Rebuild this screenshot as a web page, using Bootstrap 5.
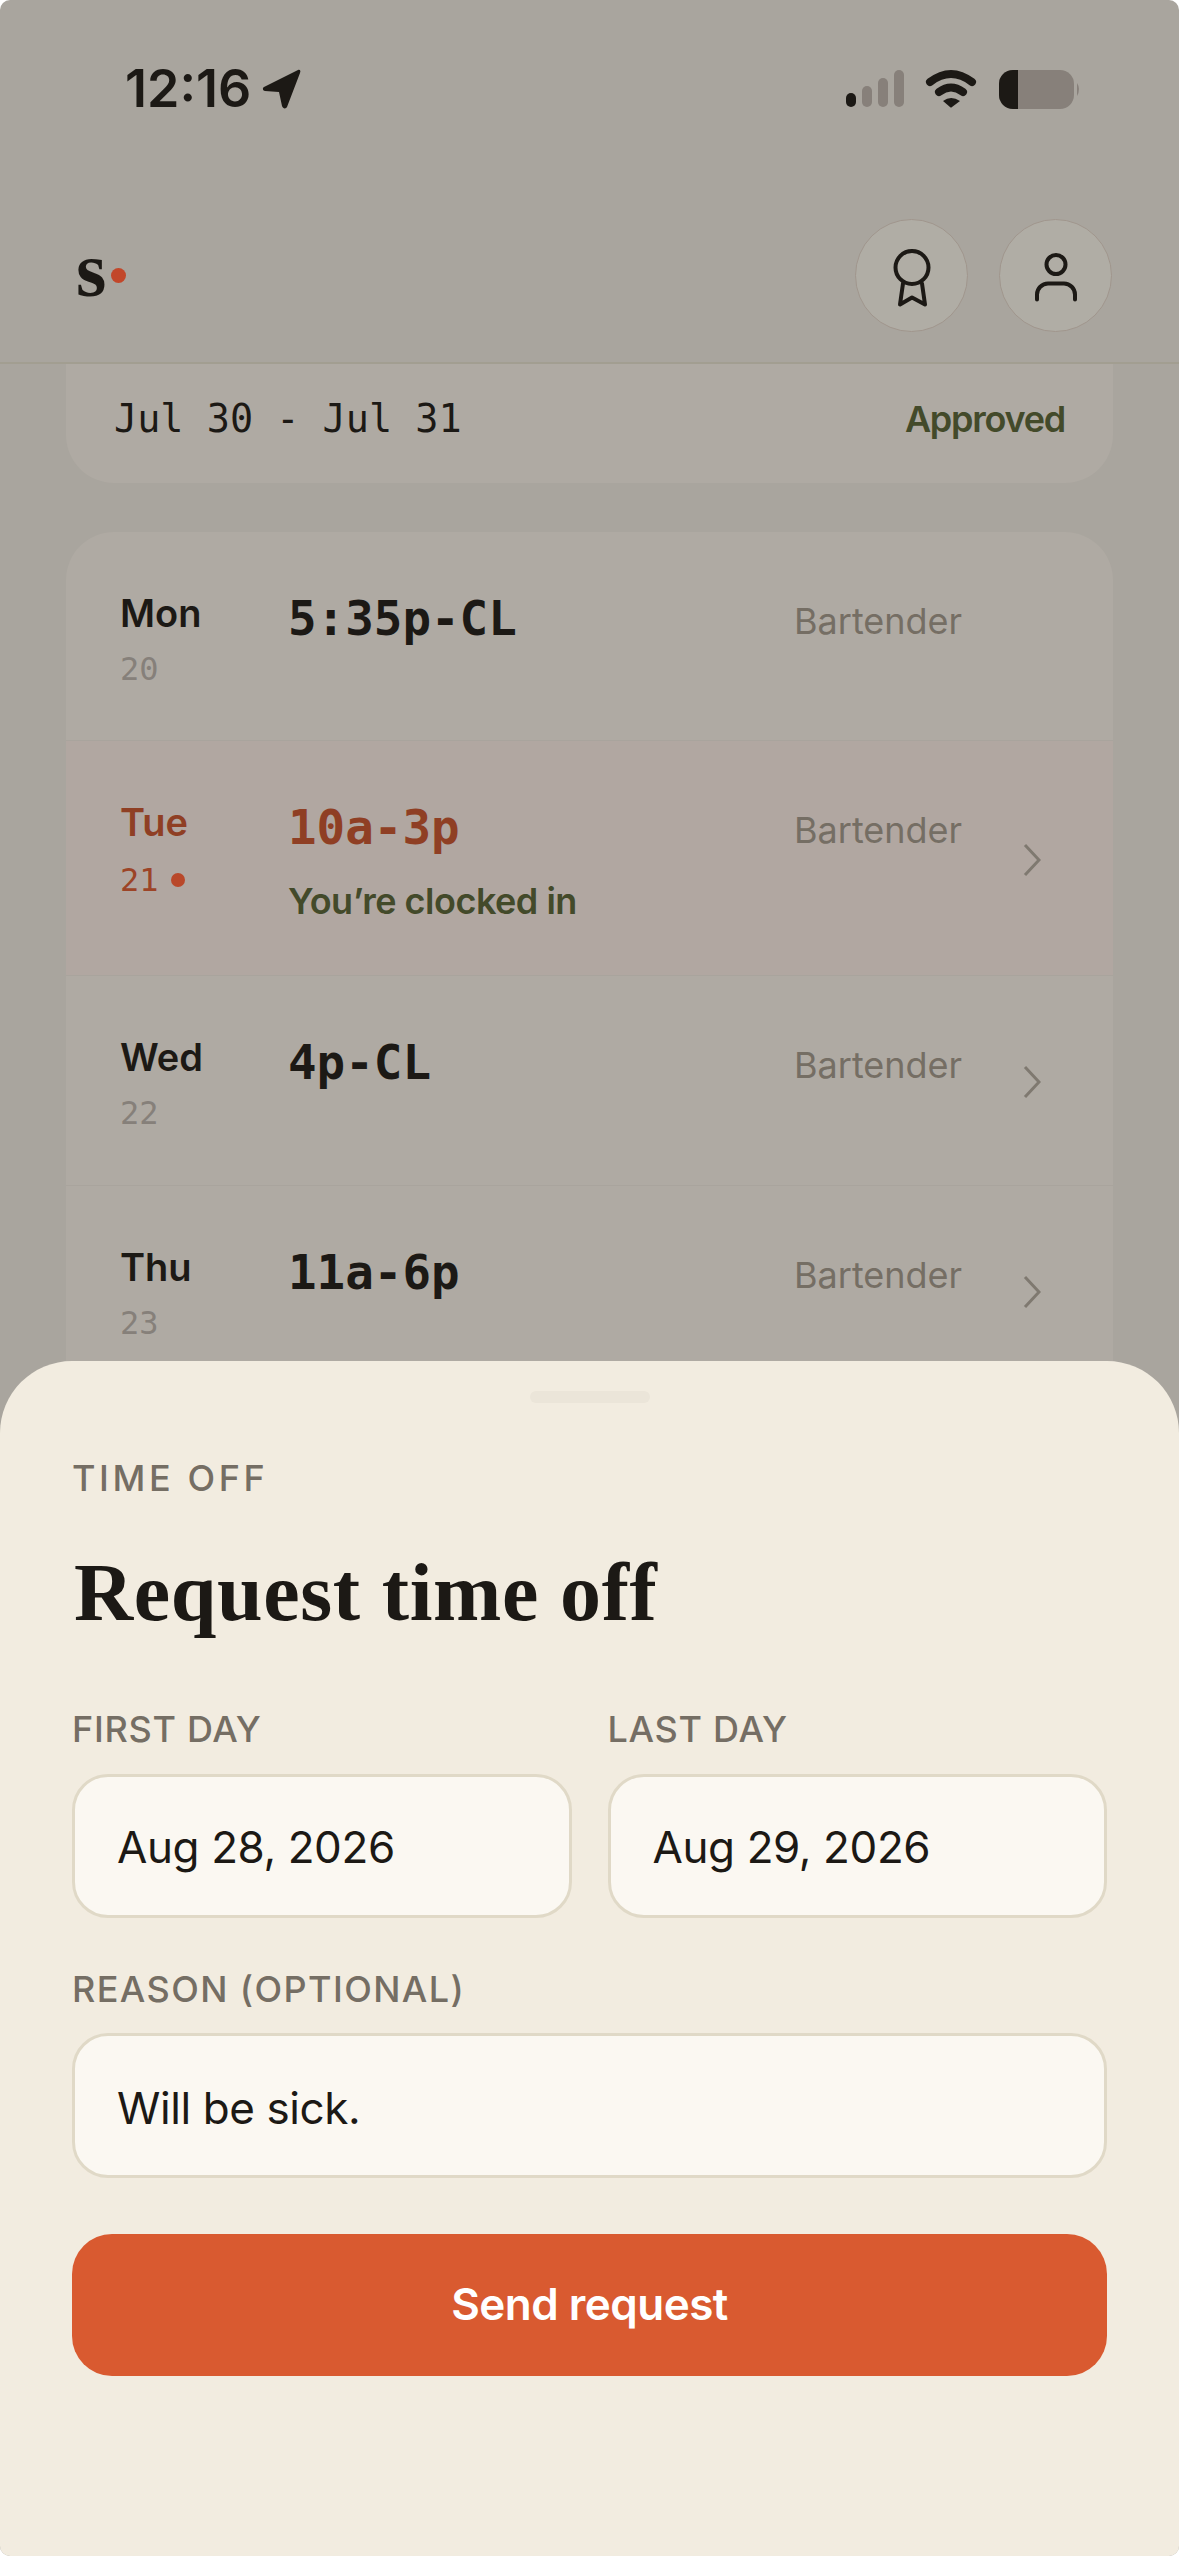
<!DOCTYPE html>
<html lang="en">
<head>
  <meta charset="UTF-8" />
  <title>Request time off</title>
  <link href="https://cdn.jsdelivr.net/npm/bootstrap@5.3.3/dist/css/bootstrap.min.css" rel="stylesheet">
  <style>
    html, body { height: 2556px; }
    body { background: #fff; color: #1c1915; font-family: Inter, "Liberation Sans", sans-serif; overflow: hidden; }
    .phone { height: 2556px; overflow: hidden; background: #a9a59e; border-radius: 10px; }

    .app-top { height: 364px; border-bottom: 2px solid #a29e91; }
    .status-row { height: 219px; padding: 69px 98px 0 125px; }
    .clock { font-size: 52px; line-height: 40px; font-weight: 600; }
    .loc-icon { margin-left: 11px; }
    .brand-row { padding: 0 67px 0 76px; }
    .brand-s { font-family: "Liberation Serif", serif; font-weight: 700; font-size: 78px; line-height: 1; margin-top: -12px; }
    .brand-dot { width: 15px; height: 15px; background: #c2472a; border-radius: 50%; margin-left: 5px; }
    .round-btn { width: 113px; height: 113px; border-radius: 50%; background: #b0ada5; border: 1px solid #a0968d; }
    .round-gap { gap: 31px; }

    .pane { margin: 0 66px; background: #afaaa3; }
    .pane-off { height: 119px; border-radius: 0 0 48px 48px; padding: 0 48px 9px; }
    .pane-days { margin-top: 49px; border-radius: 48px 48px 0 0; overflow: hidden; }
    .mono { font-family: "DejaVu Sans Mono", "Liberation Mono", monospace; }
    .off-dates { font-size: 38.5px; }
    .ok-text { font-size: 36px; font-weight: 600; color: #434a2a; letter-spacing: -1.25px; }

    .day-row { padding: 54px 72px 52px 54px; border-bottom: 1px solid #a9a49d; }
    .day-row:first-child { padding-bottom: 51px; }
    .day-row.today { background: #b1a7a1; padding-bottom: 51px; }
    .day-col { width: 168px; flex: none; }
    .day-name { font-size: 38px; line-height: 50px; font-weight: 600; margin-top: 2px; }
    .day-num { font-size: 32px; line-height: 40px; margin-top: 11px; color: #86807a; }
    .today .day-num { margin-top: 13px; }
    .shift-col { flex: 1; }
    .shift-time { font-size: 47.5px; line-height: 60px; font-weight: 700; margin-top: 3px; }
    .shift-note { font-size: 36px; line-height: 45px; font-weight: 600; color: #434a2a; margin-top: 21px; letter-spacing: -0.5px; }
    .role-col { width: 229px; flex: none; font-size: 36px; line-height: 45px; color: #756e64; margin: 13px 0 0 -2px; }
    .chev { width: 18px; flex: none; }
    .today .day-name, .today .shift-time { color: #8f3f24; }
    .today .day-num { color: #9c4427; }
    .now-dot { display: inline-block; width: 14px; height: 14px; border-radius: 50%; background: #b9482a; margin-left: 12px; vertical-align: 4px; }

    .sheet { position: absolute; left: 0; right: 0; bottom: 0; height: 1195px; background: #f2ece0; border-radius: 72px 72px 0 0; padding: 30px 72px 0; }
    .grab { width: 120px; height: 12px; background: #ebe5d9; border-radius: 6px; margin: 0 auto 53px; }
    .field-cap { font-size: 36px; line-height: 44px; font-weight: 500; letter-spacing: 0.7px; color: #756e64; text-transform: uppercase; }
    .field-cap.sheet-kicker { letter-spacing: 3.6px; }
    .field-cap.reason-cap { margin-top: 49px; letter-spacing: 1.4px; }
    .sheet-title { font-family: "Liberation Serif", serif; font-weight: 700; font-size: 82px; line-height: 100px; letter-spacing: 0.6px; margin: 43px 0 64px 2px; }
    .two-up { display: grid; grid-template-columns: 1fr 1fr; gap: 36px; }
    .form-control.sheet-box { height: 144px; margin-top: 23px; border: 3px solid #e0d9c7; border-radius: 36px; background: #fbf8f2; color: #1c1915; font-size: 44px; letter-spacing: -0.4px; padding: 2px 42px 0; display: flex; align-items: center; }
    .form-control.reason-box { margin-top: 22px; height: 145px; padding-top: 4px; }
    .btn.send-btn { display: block; width: 100%; height: 142px; margin-top: 56px; padding-bottom: 8px; background: #d95a30; border: 0; border-radius: 40px; color: #fff; font-size: 44px; font-weight: 600; letter-spacing: -0.5px; }
  </style>
</head>
<body>
  <div class="phone position-relative">
    <div class="app-top">
      <div class="status-row d-flex justify-content-between align-items-start">
        <div class="d-flex align-items-start">
          <span class="clock">12:16</span>
          <svg class="loc-icon" width="40" height="40" viewBox="0 0 40 40"><path d="M36 1 2 18c-2 1-1 4 1 4l14 1 3 14c1 3 4 3 5 1L38 4c1-2 0-4-2-3z" fill="#1c1915"/></svg>
        </div>
        <svg width="236" height="42" viewBox="845 68 236 42">
          <rect x="846" y="92" width="10" height="14" rx="5" fill="#1c1915"/>
          <rect x="862" y="85" width="10" height="21" rx="5" fill="#87807a"/>
          <rect x="878" y="77" width="10" height="29" rx="5" fill="#87807a"/>
          <rect x="894" y="69" width="10" height="37" rx="5" fill="#87807a"/>
          <path d="M930 81q21-16 42 0M939 91q12-9 24 0" fill="none" stroke="#1c1915" stroke-width="8" stroke-linecap="round"/>
          <path d="M943 100q8-6 17 0l-8 6q-1 1-2 0z" fill="#1c1915"/>
          <rect x="999" y="69" width="75" height="39" rx="14" fill="#87807a"/>
          <path d="M1013 69h5v39h-5a14 14 0 0 1-14-14V83a14 14 0 0 1 14-14z" fill="#1c1915"/>
          <path d="M1077 82q4 6 0 13z" fill="#87807a"/>
        </svg>
      </div>
      <div class="brand-row d-flex justify-content-between align-items-center">
        <div class="d-flex align-items-center">
          <span class="brand-s">s</span><span class="brand-dot"></span>
        </div>
        <div class="d-flex round-gap">
          <div class="round-btn d-flex align-items-center justify-content-center">
            <svg width="60" height="80" viewBox="0 -5.5 60 80"><g fill="none" stroke="#1c1915" stroke-width="4" stroke-linecap="round" stroke-linejoin="round"><circle cx="30" cy="26" r="16.5"/><path d="M21 42l-3 21 12-7 13 7-3-21"/></g></svg>
          </div>
          <div class="round-btn d-flex align-items-center justify-content-center">
            <svg width="60" height="80" viewBox="0 -3.5 60 80"><g fill="none" stroke="#1c1915" stroke-width="4" stroke-linecap="round"><circle cx="30" cy="25" r="9.5"/><path d="M11 60v-5c0-6 5-11 11-11h16c6 0 11 5 11 11v5"/></g></svg>
          </div>
        </div>
      </div>
    </div>

    <div class="pane pane-off d-flex justify-content-between align-items-center">
      <span class="mono off-dates">Jul 30 - Jul 31</span>
      <span class="ok-text">Approved</span>
    </div>

    <div class="pane pane-days">
      <div class="day-row d-flex">
        <div class="day-col"><div class="day-name">Mon</div><div class="day-num mono">20</div></div>
        <div class="shift-col"><div class="shift-time mono">5:35p-CL</div></div>
        <div class="role-col">Bartender</div>
        <div class="chev"></div>
      </div>
      <div class="day-row today d-flex">
        <div class="day-col"><div class="day-name">Tue</div><div class="day-num mono">21<span class="now-dot"></span></div></div>
        <div class="shift-col"><div class="shift-time mono">10a-3p</div><div class="shift-note">You’re clocked in</div></div>
        <div class="role-col">Bartender</div>
        <div class="chev align-self-center"><svg width="18" height="34" viewBox="0 0 18 34"><path d="M2 2l14 15L2 32" fill="none" stroke="#7f7970" stroke-width="3"/></svg></div>
      </div>
      <div class="day-row d-flex">
        <div class="day-col"><div class="day-name">Wed</div><div class="day-num mono">22</div></div>
        <div class="shift-col"><div class="shift-time mono">4p-CL</div></div>
        <div class="role-col">Bartender</div>
        <div class="chev align-self-center"><svg width="18" height="34" viewBox="0 0 18 34"><path d="M2 2l14 15L2 32" fill="none" stroke="#7f7970" stroke-width="3"/></svg></div>
      </div>
      <div class="day-row d-flex">
        <div class="day-col"><div class="day-name">Thu</div><div class="day-num mono">23</div></div>
        <div class="shift-col"><div class="shift-time mono">11a-6p</div></div>
        <div class="role-col">Bartender</div>
        <div class="chev align-self-center"><svg width="18" height="34" viewBox="0 0 18 34"><path d="M2 2l14 15L2 32" fill="none" stroke="#7f7970" stroke-width="3"/></svg></div>
      </div>
    </div>

    <div class="sheet">
      <div class="grab"></div>
      <div class="field-cap sheet-kicker">Time off</div>
      <h1 class="sheet-title">Request time off</h1>
      <div class="two-up">
        <div><div class="field-cap">First day</div><div class="form-control sheet-box">Aug 28, 2026</div></div>
        <div><div class="field-cap">Last day</div><div class="form-control sheet-box">Aug 29, 2026</div></div>
      </div>
      <div class="field-cap reason-cap">Reason (optional)</div>
      <div class="form-control sheet-box reason-box">Will be sick.</div>
      <button type="button" class="btn send-btn">Send request</button>
    </div>
  </div>
  <script src="https://cdn.jsdelivr.net/npm/bootstrap@5.3.3/dist/js/bootstrap.bundle.min.js"></script>
</body>
</html>
